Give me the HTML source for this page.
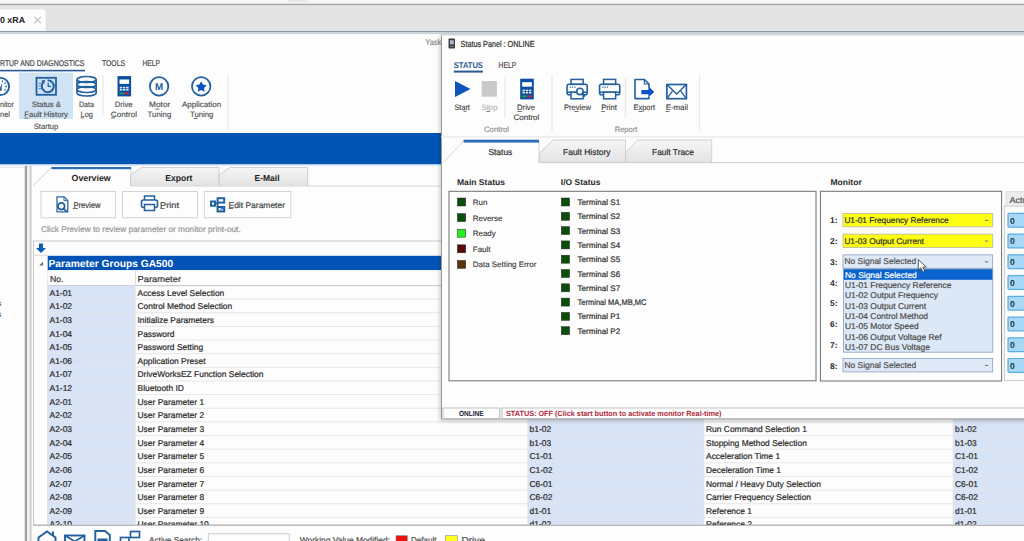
<!DOCTYPE html>
<html><head><meta charset="utf-8"><style>
html,body{margin:0;padding:0;width:1024px;height:541px;overflow:hidden;background:#fdfdfd}
svg{display:block;font-family:"Liberation Sans",sans-serif}
</style></head><body>
<svg width="1024" height="541" viewBox="0 0 1024 541" text-rendering="geometricPrecision">
<rect x="0" y="0" width="1024" height="541" fill="#fdfdfd" />
<rect x="0" y="0" width="1024" height="4" fill="#f6f6f6" />
<rect x="287.6" y="0" width="19.4" height="1.6" fill="#e6e6e6" />
<rect x="0" y="3.7" width="1024" height="1.8" fill="#a9a9a9" />
<rect x="0" y="5.5" width="1024" height="25.6" fill="#e4e4e4" />
<rect x="0" y="31" width="1024" height="1.3" fill="#8d9ba6" />
<rect x="0" y="32.3" width="1024" height="1.8" fill="#c9d2d8" />
<path d="M0 9.6 H42.6 Q45.6 9.6 45.6 12.6 V31 H0 Z" fill="#fdfdfd"/>
<text x="0" y="23.3" font-size="8.8" fill="#202020" font-weight="bold" textLength="25" lengthAdjust="spacingAndGlyphs" >0 xRA</text>
<line x1="34.2" y1="16.8" x2="41" y2="23.4" stroke="#bdbdbd" stroke-width="1.1" />
<line x1="41" y1="16.8" x2="34.2" y2="23.4" stroke="#bdbdbd" stroke-width="1.1" />
<text x="0" y="65.5" font-size="8.4" fill="#4d4d4d" stroke="#4d4d4d" stroke-width="0.22" textLength="84.5" lengthAdjust="spacingAndGlyphs" >RTUP AND DIAGNOSTICS</text>
<rect x="0" y="69.8" width="85" height="1.6" fill="#2a5a94" />
<text x="102" y="65.5" font-size="8.4" fill="#4d4d4d" stroke="#4d4d4d" stroke-width="0.22" textLength="23" lengthAdjust="spacingAndGlyphs" >TOOLS</text>
<text x="142.5" y="65.5" font-size="8.4" fill="#4d4d4d" stroke="#4d4d4d" stroke-width="0.22" textLength="17.5" lengthAdjust="spacingAndGlyphs" >HELP</text>
<text x="425.3" y="44.5" font-size="8.4" fill="#8a8f88" stroke="#8a8f88" stroke-width="0.22" textLength="16" lengthAdjust="spacingAndGlyphs" >Yask</text>
<rect x="19" y="72.6" width="54" height="46.4" fill="#cfe3f5" />
<circle cx="0.5" cy="86.5" r="8.6" fill="none" stroke="#22609f" stroke-width="1.9"/>
<line x1="2.1416966879632104" y1="81.98947542022763" x2="2.6889289172842807" y2="80.48596722697019" stroke="#22609f" stroke-width="1.3" />
<line x1="4.4319298125871605" y1="83.74683310551498" x2="5.742573083449548" y2="82.8291108073533" stroke="#22609f" stroke-width="1.3" />
<line x1="5.3" y1="86.5" x2="6.9" y2="86.5" stroke="#22609f" stroke-width="1.3" />
<line x1="4.4319298125871605" y1="89.25316689448502" x2="5.742573083449548" y2="90.1708891926467" stroke="#22609f" stroke-width="1.3" />
<path d="M-1 90.5 L2.2 82.5 L1.5 91 Z" fill="#22609f"/>
<text x="0" y="107.3" font-size="7.8" fill="#4a4a4a" stroke="#4a4a4a" stroke-width="0.12" textLength="14" lengthAdjust="spacingAndGlyphs" >nitor</text>
<text x="0" y="116.5" font-size="7.8" fill="#4a4a4a" stroke="#4a4a4a" stroke-width="0.12" textLength="10" lengthAdjust="spacingAndGlyphs" >nel</text>
<rect x="36.5" y="77.8" width="19.5" height="17" fill="none" stroke="#24609c" stroke-width="1.8" />
<path d="M43.3 82.2 A6 6 0 1 0 47.6 80.2" fill="none" stroke="#22609f" stroke-width="2"/>
<path d="M41.2 80.8 L45.2 79.8 L44 84.2 Z" fill="#22609f"/>
<line x1="48.2" y1="82.8" x2="48.2" y2="86.4" stroke="#22609f" stroke-width="1.3" />
<line x1="48.2" y1="86.4" x2="51" y2="86.4" stroke="#22609f" stroke-width="1.3" />
<line x1="38.6" y1="83.3" x2="41.4" y2="83.3" stroke="#4a7ab0" stroke-width="1" />
<line x1="38.6" y1="86" x2="41.4" y2="86" stroke="#4a7ab0" stroke-width="1" />
<line x1="38.6" y1="88.7" x2="41.4" y2="88.7" stroke="#4a7ab0" stroke-width="1" />
<text x="31.8" y="107.3" font-size="7.8" fill="#4a4a4a" stroke="#4a4a4a" stroke-width="0.12" textLength="29.2" lengthAdjust="spacingAndGlyphs" >Status &amp;</text>
<text x="24.3" y="116.5" font-size="7.8" fill="#4a4a4a" stroke="#4a4a4a" stroke-width="0.12" textLength="43.7" lengthAdjust="spacingAndGlyphs" >Fault History</text>
<text x="33.8" y="128.5" font-size="7.8" fill="#4a4a4a" stroke="#4a4a4a" stroke-width="0.12" textLength="24.5" lengthAdjust="spacingAndGlyphs" >Startup</text>
<ellipse cx="86.6" cy="79.5" rx="9.6" ry="3" fill="none" stroke="#22609f" stroke-width="1.6"/>
<ellipse cx="86.6" cy="84.5" rx="9.6" ry="3" fill="none" stroke="#22609f" stroke-width="1.6"/>
<ellipse cx="86.6" cy="89.5" rx="9.6" ry="3" fill="none" stroke="#22609f" stroke-width="1.6"/>
<path d="M77 79.5 V93 A9.6 3 0 0 0 96.2 93 V79.5" fill="none" stroke="#22609f" stroke-width="1.6"/>
<text x="79" y="107.3" font-size="7.8" fill="#4a4a4a" stroke="#4a4a4a" stroke-width="0.12" textLength="15" lengthAdjust="spacingAndGlyphs" >Data</text>
<text x="80.5" y="116.5" font-size="7.8" fill="#4a4a4a" stroke="#4a4a4a" stroke-width="0.12" textLength="12.5" lengthAdjust="spacingAndGlyphs" >Log</text>
<line x1="103" y1="75" x2="103" y2="115" stroke="#e6e6e6" stroke-width="1" />
<rect x="117.5" y="76.1" width="13.6" height="20.3" fill="#0c4fa0" />
<rect x="119.5" y="79.5" width="9.6" height="4.4" fill="#ffffff" />
<rect x="119.8" y="86.8" width="2.3999999999999995" height="1.6" fill="#dce8f4" />
<rect x="123.0" y="86.8" width="2.3999999999999995" height="1.6" fill="#dce8f4" />
<rect x="126.2" y="86.8" width="2.3999999999999995" height="1.6" fill="#dce8f4" />
<rect x="119.8" y="89.0" width="2.3999999999999995" height="1.6" fill="#dce8f4" />
<rect x="123.0" y="89.0" width="2.3999999999999995" height="1.6" fill="#dce8f4" />
<rect x="126.2" y="89.0" width="2.3999999999999995" height="1.6" fill="#dce8f4" />
<rect x="119.5" y="92.5" width="4.5" height="1.8" fill="#2aa050" />
<rect x="124.6" y="92.5" width="4.5" height="1.8" fill="#d02040" />
<text x="114.8" y="107.3" font-size="7.8" fill="#4a4a4a" stroke="#4a4a4a" stroke-width="0.12" textLength="17.7" lengthAdjust="spacingAndGlyphs" >Drive</text>
<text x="110.8" y="116.5" font-size="7.8" fill="#4a4a4a" stroke="#4a4a4a" stroke-width="0.12" textLength="26.2" lengthAdjust="spacingAndGlyphs" >Control</text>
<circle cx="159.1" cy="86.4" r="9.2" fill="none" stroke="#22609f" stroke-width="1.8"/>
<text x="159.1" y="90.2" font-size="10" fill="#22609f" font-weight="bold" text-anchor="middle" textLength="8.2" lengthAdjust="spacingAndGlyphs">M</text>
<text x="149" y="107.3" font-size="7.8" fill="#4a4a4a" stroke="#4a4a4a" stroke-width="0.12" textLength="21.3" lengthAdjust="spacingAndGlyphs" >Motor</text>
<text x="147.5" y="116.5" font-size="7.8" fill="#4a4a4a" stroke="#4a4a4a" stroke-width="0.12" textLength="23.8" lengthAdjust="spacingAndGlyphs" >Tuning</text>
<circle cx="201.2" cy="86.4" r="9.2" fill="none" stroke="#22609f" stroke-width="1.8"/>
<polygon points="201.20,81.20 202.96,84.57 206.72,85.21 204.05,87.93 204.61,91.69 201.20,90.00 197.79,91.69 198.35,87.93 195.68,85.21 199.44,84.57" fill="#0b50bc"/>
<text x="182" y="107.3" font-size="7.8" fill="#4a4a4a" stroke="#4a4a4a" stroke-width="0.12" textLength="39.3" lengthAdjust="spacingAndGlyphs" >Application</text>
<text x="190" y="116.5" font-size="7.8" fill="#4a4a4a" stroke="#4a4a4a" stroke-width="0.12" textLength="23.3" lengthAdjust="spacingAndGlyphs" >Tuning</text>
<line x1="228" y1="75" x2="228" y2="130" stroke="#e6e6e6" stroke-width="1" />
<rect x="0" y="133" width="1024" height="31.5" fill="#0054b4" />
<rect x="0" y="164.4" width="1024" height="1.6" fill="#d6e6f6" />
<text x="-3" y="306" font-size="8.4" fill="#555" stroke="#555" stroke-width="0.22" >s</text>
<text x="-3" y="317" font-size="8.4" fill="#555" stroke="#555" stroke-width="0.22" >s</text>
<rect x="0" y="167" width="25" height="0.8" fill="#ebe3e3" />
<rect x="24.8" y="166" width="2.2" height="375" fill="#a0a0a0" />
<rect x="27" y="166" width="2.6" height="375" fill="#f2f2f2" />
<rect x="29.6" y="166" width="2" height="375" fill="#cfcfcf" />
<path d="M33 186 L51.4 167.5 H131 V186" fill="#fdfdfd" stroke="#c8c8c8" stroke-width="0.8"/>
<rect x="51.4" y="167" width="79.6" height="2.2" fill="#2a6eb5" />
<defs><linearGradient id="tabg" x1="0" y1="0" x2="0" y2="1"><stop offset="0" stop-color="#f6f6f6"/><stop offset="1" stop-color="#e2e2e2"/></linearGradient></defs>
<path d="M130.5 185.5 V175 L141.5 167.5 H219 V185.5" fill="url(#tabg)" stroke="#c4c4c4" stroke-width="0.8"/>
<path d="M219 185.5 V175 L230 167.5 H307.7 V185.5" fill="url(#tabg)" stroke="#c4c4c4" stroke-width="0.8"/>
<line x1="131" y1="186" x2="1024" y2="186" stroke="#c8c8c8" stroke-width="0.8" />
<text x="71.6" y="180.5" font-size="8.8" fill="#222" font-weight="bold" textLength="39.0" lengthAdjust="spacingAndGlyphs" >Overview</text>
<text x="165.3" y="180.5" font-size="8.8" fill="#222" font-weight="bold" textLength="27.0" lengthAdjust="spacingAndGlyphs" >Export</text>
<text x="254.5" y="180.5" font-size="8.8" fill="#222" font-weight="bold" textLength="25.0" lengthAdjust="spacingAndGlyphs" >E-Mail</text>
<rect x="41" y="191.5" width="74.6" height="26.3" fill="#fdfdfd" stroke="#cfcfcf" stroke-width="0.9" />
<rect x="122.5" y="191.5" width="74.9" height="26.3" fill="#fdfdfd" stroke="#cfcfcf" stroke-width="0.9" />
<rect x="204.3" y="191.5" width="86.5" height="26.3" fill="#fdfdfd" stroke="#cfcfcf" stroke-width="0.9" />
<text x="73.5" y="207.5" font-size="8.3" fill="#4a4a4a" stroke="#4a4a4a" stroke-width="0.22" textLength="27.0" lengthAdjust="spacingAndGlyphs" >Preview</text>
<text x="160" y="207.5" font-size="8.3" fill="#4a4a4a" stroke="#4a4a4a" stroke-width="0.22" textLength="19" lengthAdjust="spacingAndGlyphs" >Print</text>
<text x="228.5" y="207.5" font-size="8.3" fill="#4a4a4a" stroke="#4a4a4a" stroke-width="0.22" textLength="56.5" lengthAdjust="spacingAndGlyphs" >Edit Parameter</text>
<path d="M57 196.8 H64 L67.8 200.6 V211.8 H57 Z" fill="none" stroke="#2a6aa0" stroke-width="1.3"/>
<path d="M64 196.8 V200.6 H67.8" fill="none" stroke="#2a6aa0" stroke-width="1"/>
<circle cx="61.3" cy="206.2" r="3.3" fill="#fdfdfd" stroke="#1f5a98" stroke-width="1.7"/>
<line x1="63.6" y1="208.6" x2="67" y2="212" stroke="#1f5a98" stroke-width="1.7" />
<g transform="translate(3.5,0)">
<path d="M141 200 V196 H151 V200" fill="none" stroke="#22609f" stroke-width="1.5"/>
<rect x="138" y="200" width="16" height="7.5" rx="2" fill="none" stroke="#22609f" stroke-width="1.6"/>
<rect x="141" y="204.5" width="10" height="6" fill="#fdfdfd" stroke="#22609f" stroke-width="1.5"/>
</g>
<rect x="211" y="201.5" width="4" height="4.2" fill="#fdfdfd" stroke="#2262a4" stroke-width="2" />
<rect x="217.6" y="198.2" width="6.6" height="4.4" fill="#fdfdfd" stroke="#2262a4" stroke-width="2" />
<rect x="217.6" y="207" width="6.6" height="4.4" fill="#fdfdfd" stroke="#1d5a8c" stroke-width="2" />
<line x1="215" y1="203.6" x2="217.6" y2="203.6" stroke="#2262a4" stroke-width="1.6" />
<line x1="217.6" y1="202" x2="217.6" y2="207.5" stroke="#2262a4" stroke-width="1.8" />
<path d="M219.5 210 L223.8 205.6 L224.6 208.8 Z" fill="#1a6ad0"/>
<text x="41" y="231.5" font-size="8.3" fill="#9a9a9a" stroke="#9a9a9a" stroke-width="0.22" textLength="199.7" lengthAdjust="spacingAndGlyphs" >Click Preview to review parameter or monitor print-out.</text>
<rect x="33.5" y="241" width="990.5" height="284" fill="#fdfdfd" stroke="#c9c9c9" stroke-width="1" />
<path d="M39 243.5 H43 V248 H46 L41 253 L36 248 H39 Z" fill="#0a5cc0"/>
<rect x="47.7" y="255.8" width="976.3" height="14.4" fill="#0352b6" />
<text x="48.5" y="267" font-size="10.3" fill="#ffffff" font-weight="bold" textLength="124.7" lengthAdjust="spacingAndGlyphs" >Parameter Groups GA500</text>
<path d="M39.2 265.4 L43 261.8 V265.4 Z" fill="#666"/>
<line x1="33.6" y1="255.2" x2="47.7" y2="255.2" stroke="#d4d4d4" stroke-width="0.9" />
<line x1="47.9" y1="270" x2="47.9" y2="525" stroke="#cfcfcf" stroke-width="0.9" />
<rect x="47.7" y="270.2" width="976.3" height="15.3" fill="#fdfdfd" />
<line x1="47.7" y1="285.6" x2="1024" y2="285.6" stroke="#cdcdcd" stroke-width="1.4" />
<line x1="135.5" y1="270.2" x2="135.5" y2="285.5" stroke="#dcdcdc" stroke-width="1" />
<text x="50" y="281.5" font-size="8.6" fill="#3a3a3a" stroke="#3a3a3a" stroke-width="0.22" textLength="13.5" lengthAdjust="spacingAndGlyphs" >No.</text>
<text x="137.5" y="281.5" font-size="8.6" fill="#3a3a3a" stroke="#3a3a3a" stroke-width="0.22" textLength="43.5" lengthAdjust="spacingAndGlyphs" >Parameter</text>
<clipPath id="tclip"><rect x="33.5" y="285.5" width="990.5" height="239.5"/></clipPath>
<g clip-path="url(#tclip)">
<rect x="47.7" y="285.5" width="87.8" height="13.64" fill="#d8e4f5" />
<rect x="527.5" y="285.5" width="176.5" height="13.64" fill="#d8e4f5" />
<rect x="953" y="285.5" width="71" height="13.64" fill="#d8e4f5" />
<line x1="47.7" y1="299.14" x2="1024" y2="299.14" stroke="#e4e4e4" stroke-width="0.9" />
<text x="49.5" y="295.6" font-size="8.45" fill="#2e2e2e" stroke="#2e2e2e" stroke-width="0.22" >A1-01</text>
<text x="137.5" y="295.6" font-size="8.45" fill="#2e2e2e" stroke="#2e2e2e" stroke-width="0.22" >Access Level Selection</text>
<rect x="47.7" y="299.14" width="87.8" height="13.64" fill="#d8e4f5" />
<rect x="527.5" y="299.14" width="176.5" height="13.64" fill="#d8e4f5" />
<rect x="953" y="299.14" width="71" height="13.64" fill="#d8e4f5" />
<line x1="47.7" y1="312.78" x2="1024" y2="312.78" stroke="#e4e4e4" stroke-width="0.9" />
<text x="49.5" y="309.24" font-size="8.45" fill="#2e2e2e" stroke="#2e2e2e" stroke-width="0.22" >A1-02</text>
<text x="137.5" y="309.24" font-size="8.45" fill="#2e2e2e" stroke="#2e2e2e" stroke-width="0.22" >Control Method Selection</text>
<rect x="47.7" y="312.78" width="87.8" height="13.64" fill="#d8e4f5" />
<rect x="527.5" y="312.78" width="176.5" height="13.64" fill="#d8e4f5" />
<rect x="953" y="312.78" width="71" height="13.64" fill="#d8e4f5" />
<line x1="47.7" y1="326.41999999999996" x2="1024" y2="326.41999999999996" stroke="#e4e4e4" stroke-width="0.9" />
<text x="49.5" y="322.88" font-size="8.45" fill="#2e2e2e" stroke="#2e2e2e" stroke-width="0.22" >A1-03</text>
<text x="137.5" y="322.88" font-size="8.45" fill="#2e2e2e" stroke="#2e2e2e" stroke-width="0.22" >Initialize Parameters</text>
<rect x="47.7" y="326.42" width="87.8" height="13.64" fill="#d8e4f5" />
<rect x="527.5" y="326.42" width="176.5" height="13.64" fill="#d8e4f5" />
<rect x="953" y="326.42" width="71" height="13.64" fill="#d8e4f5" />
<line x1="47.7" y1="340.06" x2="1024" y2="340.06" stroke="#e4e4e4" stroke-width="0.9" />
<text x="49.5" y="336.52000000000004" font-size="8.45" fill="#2e2e2e" stroke="#2e2e2e" stroke-width="0.22" >A1-04</text>
<text x="137.5" y="336.52000000000004" font-size="8.45" fill="#2e2e2e" stroke="#2e2e2e" stroke-width="0.22" >Password</text>
<rect x="47.7" y="340.06" width="87.8" height="13.64" fill="#d8e4f5" />
<rect x="527.5" y="340.06" width="176.5" height="13.64" fill="#d8e4f5" />
<rect x="953" y="340.06" width="71" height="13.64" fill="#d8e4f5" />
<line x1="47.7" y1="353.7" x2="1024" y2="353.7" stroke="#e4e4e4" stroke-width="0.9" />
<text x="49.5" y="350.16" font-size="8.45" fill="#2e2e2e" stroke="#2e2e2e" stroke-width="0.22" >A1-05</text>
<text x="137.5" y="350.16" font-size="8.45" fill="#2e2e2e" stroke="#2e2e2e" stroke-width="0.22" >Password Setting</text>
<rect x="47.7" y="353.7" width="87.8" height="13.64" fill="#d8e4f5" />
<rect x="527.5" y="353.7" width="176.5" height="13.64" fill="#d8e4f5" />
<rect x="953" y="353.7" width="71" height="13.64" fill="#d8e4f5" />
<line x1="47.7" y1="367.34" x2="1024" y2="367.34" stroke="#e4e4e4" stroke-width="0.9" />
<text x="49.5" y="363.8" font-size="8.45" fill="#2e2e2e" stroke="#2e2e2e" stroke-width="0.22" >A1-06</text>
<text x="137.5" y="363.8" font-size="8.45" fill="#2e2e2e" stroke="#2e2e2e" stroke-width="0.22" >Application Preset</text>
<rect x="47.7" y="367.34000000000003" width="87.8" height="13.64" fill="#d8e4f5" />
<rect x="527.5" y="367.34000000000003" width="176.5" height="13.64" fill="#d8e4f5" />
<rect x="953" y="367.34000000000003" width="71" height="13.64" fill="#d8e4f5" />
<line x1="47.7" y1="380.98" x2="1024" y2="380.98" stroke="#e4e4e4" stroke-width="0.9" />
<text x="49.5" y="377.44000000000005" font-size="8.45" fill="#2e2e2e" stroke="#2e2e2e" stroke-width="0.22" >A1-07</text>
<text x="137.5" y="377.44000000000005" font-size="8.45" fill="#2e2e2e" stroke="#2e2e2e" stroke-width="0.22" >DriveWorksEZ Function Selection</text>
<rect x="47.7" y="380.98" width="87.8" height="13.64" fill="#d8e4f5" />
<rect x="527.5" y="380.98" width="176.5" height="13.64" fill="#d8e4f5" />
<rect x="953" y="380.98" width="71" height="13.64" fill="#d8e4f5" />
<line x1="47.7" y1="394.62" x2="1024" y2="394.62" stroke="#e4e4e4" stroke-width="0.9" />
<text x="49.5" y="391.08000000000004" font-size="8.45" fill="#2e2e2e" stroke="#2e2e2e" stroke-width="0.22" >A1-12</text>
<text x="137.5" y="391.08000000000004" font-size="8.45" fill="#2e2e2e" stroke="#2e2e2e" stroke-width="0.22" >Bluetooth ID</text>
<rect x="47.7" y="394.62" width="87.8" height="13.64" fill="#d8e4f5" />
<rect x="527.5" y="394.62" width="176.5" height="13.64" fill="#d8e4f5" />
<rect x="953" y="394.62" width="71" height="13.64" fill="#d8e4f5" />
<line x1="47.7" y1="408.26" x2="1024" y2="408.26" stroke="#e4e4e4" stroke-width="0.9" />
<text x="49.5" y="404.72" font-size="8.45" fill="#2e2e2e" stroke="#2e2e2e" stroke-width="0.22" >A2-01</text>
<text x="137.5" y="404.72" font-size="8.45" fill="#2e2e2e" stroke="#2e2e2e" stroke-width="0.22" >User Parameter 1</text>
<rect x="47.7" y="408.26" width="87.8" height="13.64" fill="#d8e4f5" />
<rect x="527.5" y="408.26" width="176.5" height="13.64" fill="#d8e4f5" />
<rect x="953" y="408.26" width="71" height="13.64" fill="#d8e4f5" />
<line x1="47.7" y1="421.9" x2="1024" y2="421.9" stroke="#e4e4e4" stroke-width="0.9" />
<text x="49.5" y="418.36" font-size="8.45" fill="#2e2e2e" stroke="#2e2e2e" stroke-width="0.22" >A2-02</text>
<text x="137.5" y="418.36" font-size="8.45" fill="#2e2e2e" stroke="#2e2e2e" stroke-width="0.22" >User Parameter 2</text>
<rect x="47.7" y="421.9" width="87.8" height="13.64" fill="#d8e4f5" />
<rect x="527.5" y="421.9" width="176.5" height="13.64" fill="#d8e4f5" />
<rect x="953" y="421.9" width="71" height="13.64" fill="#d8e4f5" />
<line x1="47.7" y1="435.53999999999996" x2="1024" y2="435.53999999999996" stroke="#e4e4e4" stroke-width="0.9" />
<text x="49.5" y="432.0" font-size="8.45" fill="#2e2e2e" stroke="#2e2e2e" stroke-width="0.22" >A2-03</text>
<text x="137.5" y="432.0" font-size="8.45" fill="#2e2e2e" stroke="#2e2e2e" stroke-width="0.22" >User Parameter 3</text>
<rect x="47.7" y="435.54" width="87.8" height="13.64" fill="#d8e4f5" />
<rect x="527.5" y="435.54" width="176.5" height="13.64" fill="#d8e4f5" />
<rect x="953" y="435.54" width="71" height="13.64" fill="#d8e4f5" />
<line x1="47.7" y1="449.18" x2="1024" y2="449.18" stroke="#e4e4e4" stroke-width="0.9" />
<text x="49.5" y="445.64000000000004" font-size="8.45" fill="#2e2e2e" stroke="#2e2e2e" stroke-width="0.22" >A2-04</text>
<text x="137.5" y="445.64000000000004" font-size="8.45" fill="#2e2e2e" stroke="#2e2e2e" stroke-width="0.22" >User Parameter 4</text>
<rect x="47.7" y="449.18" width="87.8" height="13.64" fill="#d8e4f5" />
<rect x="527.5" y="449.18" width="176.5" height="13.64" fill="#d8e4f5" />
<rect x="953" y="449.18" width="71" height="13.64" fill="#d8e4f5" />
<line x1="47.7" y1="462.82" x2="1024" y2="462.82" stroke="#e4e4e4" stroke-width="0.9" />
<text x="49.5" y="459.28000000000003" font-size="8.45" fill="#2e2e2e" stroke="#2e2e2e" stroke-width="0.22" >A2-05</text>
<text x="137.5" y="459.28000000000003" font-size="8.45" fill="#2e2e2e" stroke="#2e2e2e" stroke-width="0.22" >User Parameter 5</text>
<rect x="47.7" y="462.82" width="87.8" height="13.64" fill="#d8e4f5" />
<rect x="527.5" y="462.82" width="176.5" height="13.64" fill="#d8e4f5" />
<rect x="953" y="462.82" width="71" height="13.64" fill="#d8e4f5" />
<line x1="47.7" y1="476.46" x2="1024" y2="476.46" stroke="#e4e4e4" stroke-width="0.9" />
<text x="49.5" y="472.92" font-size="8.45" fill="#2e2e2e" stroke="#2e2e2e" stroke-width="0.22" >A2-06</text>
<text x="137.5" y="472.92" font-size="8.45" fill="#2e2e2e" stroke="#2e2e2e" stroke-width="0.22" >User Parameter 6</text>
<rect x="47.7" y="476.46000000000004" width="87.8" height="13.64" fill="#d8e4f5" />
<rect x="527.5" y="476.46000000000004" width="176.5" height="13.64" fill="#d8e4f5" />
<rect x="953" y="476.46000000000004" width="71" height="13.64" fill="#d8e4f5" />
<line x1="47.7" y1="490.1" x2="1024" y2="490.1" stroke="#e4e4e4" stroke-width="0.9" />
<text x="49.5" y="486.56000000000006" font-size="8.45" fill="#2e2e2e" stroke="#2e2e2e" stroke-width="0.22" >A2-07</text>
<text x="137.5" y="486.56000000000006" font-size="8.45" fill="#2e2e2e" stroke="#2e2e2e" stroke-width="0.22" >User Parameter 7</text>
<rect x="47.7" y="490.1" width="87.8" height="13.64" fill="#d8e4f5" />
<rect x="527.5" y="490.1" width="176.5" height="13.64" fill="#d8e4f5" />
<rect x="953" y="490.1" width="71" height="13.64" fill="#d8e4f5" />
<line x1="47.7" y1="503.74" x2="1024" y2="503.74" stroke="#e4e4e4" stroke-width="0.9" />
<text x="49.5" y="500.20000000000005" font-size="8.45" fill="#2e2e2e" stroke="#2e2e2e" stroke-width="0.22" >A2-08</text>
<text x="137.5" y="500.20000000000005" font-size="8.45" fill="#2e2e2e" stroke="#2e2e2e" stroke-width="0.22" >User Parameter 8</text>
<rect x="47.7" y="503.74" width="87.8" height="13.64" fill="#d8e4f5" />
<rect x="527.5" y="503.74" width="176.5" height="13.64" fill="#d8e4f5" />
<rect x="953" y="503.74" width="71" height="13.64" fill="#d8e4f5" />
<line x1="47.7" y1="517.38" x2="1024" y2="517.38" stroke="#e4e4e4" stroke-width="0.9" />
<text x="49.5" y="513.84" font-size="8.45" fill="#2e2e2e" stroke="#2e2e2e" stroke-width="0.22" >A2-09</text>
<text x="137.5" y="513.84" font-size="8.45" fill="#2e2e2e" stroke="#2e2e2e" stroke-width="0.22" >User Parameter 9</text>
<rect x="47.7" y="517.38" width="87.8" height="13.64" fill="#d8e4f5" />
<rect x="527.5" y="517.38" width="176.5" height="13.64" fill="#d8e4f5" />
<rect x="953" y="517.38" width="71" height="13.64" fill="#d8e4f5" />
<line x1="47.7" y1="531.02" x2="1024" y2="531.02" stroke="#e4e4e4" stroke-width="0.9" />
<text x="49.5" y="527.48" font-size="8.45" fill="#2e2e2e" stroke="#2e2e2e" stroke-width="0.22" >A2-10</text>
<text x="137.5" y="527.48" font-size="8.45" fill="#2e2e2e" stroke="#2e2e2e" stroke-width="0.22" >User Parameter 10</text>
<text x="529.5" y="432.0" font-size="8.45" fill="#2e2e2e" stroke="#2e2e2e" stroke-width="0.22" >b1-02</text>
<text x="706" y="432.0" font-size="8.45" fill="#2e2e2e" stroke="#2e2e2e" stroke-width="0.22" >Run Command Selection 1</text>
<text x="955" y="432.0" font-size="8.45" fill="#2e2e2e" stroke="#2e2e2e" stroke-width="0.22" >b1-02</text>
<text x="529.5" y="445.64000000000004" font-size="8.45" fill="#2e2e2e" stroke="#2e2e2e" stroke-width="0.22" >b1-03</text>
<text x="706" y="445.64000000000004" font-size="8.45" fill="#2e2e2e" stroke="#2e2e2e" stroke-width="0.22" >Stopping Method Selection</text>
<text x="955" y="445.64000000000004" font-size="8.45" fill="#2e2e2e" stroke="#2e2e2e" stroke-width="0.22" >b1-03</text>
<text x="529.5" y="459.28000000000003" font-size="8.45" fill="#2e2e2e" stroke="#2e2e2e" stroke-width="0.22" >C1-01</text>
<text x="706" y="459.28000000000003" font-size="8.45" fill="#2e2e2e" stroke="#2e2e2e" stroke-width="0.22" >Acceleration Time 1</text>
<text x="955" y="459.28000000000003" font-size="8.45" fill="#2e2e2e" stroke="#2e2e2e" stroke-width="0.22" >C1-01</text>
<text x="529.5" y="472.92" font-size="8.45" fill="#2e2e2e" stroke="#2e2e2e" stroke-width="0.22" >C1-02</text>
<text x="706" y="472.92" font-size="8.45" fill="#2e2e2e" stroke="#2e2e2e" stroke-width="0.22" >Deceleration Time 1</text>
<text x="955" y="472.92" font-size="8.45" fill="#2e2e2e" stroke="#2e2e2e" stroke-width="0.22" >C1-02</text>
<text x="529.5" y="486.56000000000006" font-size="8.45" fill="#2e2e2e" stroke="#2e2e2e" stroke-width="0.22" >C6-01</text>
<text x="706" y="486.56000000000006" font-size="8.45" fill="#2e2e2e" stroke="#2e2e2e" stroke-width="0.22" >Normal / Heavy Duty Selection</text>
<text x="955" y="486.56000000000006" font-size="8.45" fill="#2e2e2e" stroke="#2e2e2e" stroke-width="0.22" >C6-01</text>
<text x="529.5" y="500.20000000000005" font-size="8.45" fill="#2e2e2e" stroke="#2e2e2e" stroke-width="0.22" >C6-02</text>
<text x="706" y="500.20000000000005" font-size="8.45" fill="#2e2e2e" stroke="#2e2e2e" stroke-width="0.22" >Carrier Frequency Selection</text>
<text x="955" y="500.20000000000005" font-size="8.45" fill="#2e2e2e" stroke="#2e2e2e" stroke-width="0.22" >C6-02</text>
<text x="529.5" y="513.84" font-size="8.45" fill="#2e2e2e" stroke="#2e2e2e" stroke-width="0.22" >d1-01</text>
<text x="706" y="513.84" font-size="8.45" fill="#2e2e2e" stroke="#2e2e2e" stroke-width="0.22" >Reference 1</text>
<text x="955" y="513.84" font-size="8.45" fill="#2e2e2e" stroke="#2e2e2e" stroke-width="0.22" >d1-01</text>
<text x="529.5" y="527.48" font-size="8.45" fill="#2e2e2e" stroke="#2e2e2e" stroke-width="0.22" >d1-02</text>
<text x="706" y="527.48" font-size="8.45" fill="#2e2e2e" stroke="#2e2e2e" stroke-width="0.22" >Reference 2</text>
<text x="955" y="527.48" font-size="8.45" fill="#2e2e2e" stroke="#2e2e2e" stroke-width="0.22" >d1-02</text>
</g>
<line x1="135.5" y1="285.5" x2="135.5" y2="525" stroke="#e8e8e8" stroke-width="0.8" />
<line x1="527.5" y1="285.5" x2="527.5" y2="525" stroke="#e8e8e8" stroke-width="0.8" />
<line x1="704" y1="285.5" x2="704" y2="525" stroke="#e8e8e8" stroke-width="0.8" />
<line x1="953" y1="285.5" x2="953" y2="525" stroke="#e8e8e8" stroke-width="0.8" />
<line x1="33.5" y1="525.3" x2="1024" y2="525.3" stroke="#b9b9b9" stroke-width="1.2" />
<path d="M38.5 543 V537.5 L47 531.5 L55.5 537.5 V543" fill="none" stroke="#22609f" stroke-width="1.9"/>
<rect x="52" y="531.5" width="2" height="3.5" fill="#22609f" />
<rect x="65" y="535.5" width="19.5" height="10" fill="none" stroke="#22609f" stroke-width="1.9" />
<path d="M65 535.5 L74.75 541.5 L84.5 535.5" fill="none" stroke="#22609f" stroke-width="1.7"/>
<path d="M95.3 531 H105 L109.8 535 V543 H95.3 Z" fill="none" stroke="#22609f" stroke-width="1.9"/>
<rect x="97.5" y="538.5" width="10" height="4" fill="#22609f" />
<rect x="120.5" y="537.5" width="8.5" height="6" fill="none" stroke="#22609f" stroke-width="1.7" />
<rect x="130.5" y="531.5" width="9" height="6" fill="none" stroke="#22609f" stroke-width="1.7" />
<text x="149" y="543" font-size="8.6" fill="#555" stroke="#555" stroke-width="0.22" textLength="53" lengthAdjust="spacingAndGlyphs" >Active Search:</text>
<rect x="208.3" y="533.8" width="81" height="10" fill="#fdfdfd" stroke="#c8c8c8" stroke-width="0.9" />
<text x="299.8" y="543" font-size="8.6" fill="#555" stroke="#555" stroke-width="0.22" textLength="90.2" lengthAdjust="spacingAndGlyphs" >Working Value Modified:</text>
<rect x="396" y="535.7" width="11.3" height="10" fill="#ee1111" stroke="#888" stroke-width="0.6" />
<text x="411" y="543" font-size="8.6" fill="#555" stroke="#555" stroke-width="0.22" textLength="25.5" lengthAdjust="spacingAndGlyphs" >Default</text>
<rect x="445.3" y="535.7" width="12" height="10" fill="#ffff22" stroke="#888" stroke-width="0.6" />
<text x="461.5" y="543" font-size="8.6" fill="#555" stroke="#555" stroke-width="0.22" textLength="23.5" lengthAdjust="spacingAndGlyphs" >Drive</text>
<defs><filter id="shd" x="-5%" y="-5%" width="110%" height="110%"><feGaussianBlur stdDeviation="2"/></filter></defs>
<rect x="440" y="36" width="600" height="385" fill="rgba(0,0,0,0.22)" filter="url(#shd)"/>
<rect x="441" y="34.4" width="583" height="384.4" fill="#fdfdfd" />
<line x1="441.5" y1="34.4" x2="441.5" y2="418.8" stroke="#9a9a9a" stroke-width="1" />
<line x1="441" y1="34.9" x2="1024" y2="34.9" stroke="#c9c9c9" stroke-width="1" />
<line x1="441" y1="418.9" x2="1024" y2="418.9" stroke="#a4a4a4" stroke-width="1" />
<rect x="448.5" y="38.5" width="6.5" height="10" fill="#3c3c3c" rx="0.8" />
<rect x="449.8" y="40.2" width="4" height="4.2" fill="#a9b6cc" />
<rect x="450.3" y="46" width="3" height="0.8" fill="#9a9a9a" />
<text x="460.6" y="47" font-size="8.8" fill="#303030" stroke="#303030" stroke-width="0.22" textLength="73.9" lengthAdjust="spacingAndGlyphs" >Status Panel : ONLINE</text>
<text x="453.8" y="67.5" font-size="8.4" fill="#2a5a94" font-weight="bold" textLength="29.1" lengthAdjust="spacingAndGlyphs" >STATUS</text>
<rect x="453.8" y="70.6" width="29.1" height="2" fill="#2a5a94" />
<text x="498.6" y="67.5" font-size="8.4" fill="#5a4a5a" stroke="#5a4a5a" stroke-width="0.22" textLength="17.6" lengthAdjust="spacingAndGlyphs" >HELP</text>
<path d="M455 81 L470.5 89 L455 97 Z" fill="#0d55bb"/>
<text x="454.5" y="110" font-size="7.9" fill="#404040" stroke="#404040" stroke-width="0.12" textLength="15.4" lengthAdjust="spacingAndGlyphs" >Start</text>
<rect x="481.7" y="81" width="15.2" height="15.7" fill="#c9c9c9" />
<text x="481.5" y="110" font-size="7.9" fill="#b0b0b0" stroke="#b0b0b0" stroke-width="0.12" textLength="16.0" lengthAdjust="spacingAndGlyphs" >Stop</text>
<line x1="505" y1="76" x2="505" y2="118" stroke="#e4e4e4" stroke-width="1" />
<rect x="520.2" y="78.7" width="13.6" height="20.7" fill="#0c4fa0" />
<rect x="522.2" y="82.16699507389163" width="9.6" height="4.4866995073891625" fill="#ffffff" />
<rect x="522.5" y="89.61083743842364" width="2.3999999999999995" height="1.631527093596059" fill="#dce8f4" />
<rect x="525.7" y="89.61083743842364" width="2.3999999999999995" height="1.631527093596059" fill="#dce8f4" />
<rect x="528.9" y="89.61083743842364" width="2.3999999999999995" height="1.631527093596059" fill="#dce8f4" />
<rect x="522.5" y="91.85418719211823" width="2.3999999999999995" height="1.631527093596059" fill="#dce8f4" />
<rect x="525.7" y="91.85418719211823" width="2.3999999999999995" height="1.631527093596059" fill="#dce8f4" />
<rect x="528.9" y="91.85418719211823" width="2.3999999999999995" height="1.631527093596059" fill="#dce8f4" />
<rect x="522.2" y="95.42315270935961" width="4.5" height="1.8354679802955665" fill="#2aa050" />
<rect x="527.3" y="95.42315270935961" width="4.5" height="1.8354679802955665" fill="#d02040" />
<text x="517" y="110" font-size="7.9" fill="#404040" stroke="#404040" stroke-width="0.12" textLength="18" lengthAdjust="spacingAndGlyphs" >Drive</text>
<text x="513.4" y="119.5" font-size="7.9" fill="#404040" stroke="#404040" stroke-width="0.12" textLength="26.0" lengthAdjust="spacingAndGlyphs" >Control</text>
<text x="484" y="132.4" font-size="7.9" fill="#8a8a8a" stroke="#8a8a8a" stroke-width="0.12" textLength="25" lengthAdjust="spacingAndGlyphs" >Control</text>
<line x1="552" y1="75" x2="552" y2="131" stroke="#e4e4e4" stroke-width="1" />
<rect x="571.05" y="79.4" width="12.1" height="5" fill="none" stroke="#22609f" stroke-width="1.5"/>
<rect x="567.05" y="84.2" width="20.2" height="10.6" rx="2" fill="none" stroke="#22609f" stroke-width="1.6"/>
<line x1="567.3" y1="92.2" x2="586.8" y2="92.2" stroke="#22609f" stroke-width="1.5" />
<rect x="571.05" y="92.2" width="12.1" height="6.6" fill="#fdfdfd" stroke="#22609f" stroke-width="1.5"/>
<rect x="569.5999999999999" y="86.6" width="1.3" height="1.1" fill="#22609f" />
<rect x="571.8999999999999" y="86.6" width="1.3" height="1.1" fill="#22609f" />
<rect x="574.1999999999999" y="86.6" width="1.3" height="1.1" fill="#22609f" />
<circle cx="579.9" cy="91.4" r="3.2" fill="#fdfdfd" stroke="#22609f" stroke-width="1.6"/>
<line x1="582.1999999999999" y1="93.7" x2="584.9" y2="96.6" stroke="#22609f" stroke-width="1.7" />
<text x="564" y="110" font-size="7.9" fill="#404040" stroke="#404040" stroke-width="0.12" textLength="27" lengthAdjust="spacingAndGlyphs" >Preview</text>
<rect x="603.55" y="79.4" width="12.1" height="5" fill="none" stroke="#22609f" stroke-width="1.5"/>
<rect x="599.55" y="84.2" width="20.2" height="10.6" rx="2" fill="none" stroke="#22609f" stroke-width="1.6"/>
<line x1="599.8" y1="92.2" x2="619.3" y2="92.2" stroke="#22609f" stroke-width="1.5" />
<rect x="603.55" y="92.2" width="12.1" height="6.6" fill="#fdfdfd" stroke="#22609f" stroke-width="1.5"/>
<rect x="602.0999999999999" y="86.6" width="1.3" height="1.1" fill="#22609f" />
<rect x="604.3999999999999" y="86.6" width="1.3" height="1.1" fill="#22609f" />
<rect x="606.6999999999999" y="86.6" width="1.3" height="1.1" fill="#22609f" />
<text x="601.2" y="110" font-size="7.9" fill="#404040" stroke="#404040" stroke-width="0.12" textLength="15.8" lengthAdjust="spacingAndGlyphs" >Print</text>
<line x1="625.3" y1="78" x2="625.3" y2="118" stroke="#e4e4e4" stroke-width="1" />
<path d="M649 87.5 V84 L644.4 79.5 H635 V98.6 H649 V96.5" fill="none" stroke="#22609f" stroke-width="1.6" stroke-linejoin="round"/>
<path d="M644.4 79.6 V84 H648.8" fill="none" stroke="#22609f" stroke-width="1.2"/>
<path d="M641.4 90 H648.4 V86.2 L654.3 92 L648.4 97.3 V94.3 H641.4 Z" fill="#0d52c4"/>
<text x="633.6" y="110" font-size="7.9" fill="#404040" stroke="#404040" stroke-width="0.12" textLength="21.4" lengthAdjust="spacingAndGlyphs" >Export</text>
<rect x="666.9" y="84.5" width="19.5" height="14.2" fill="none" stroke="#22609f" stroke-width="1.7" />
<path d="M667 84.6 L676.6 94 L686.3 84.6 M667 98.6 L672.4 91.2 M686.3 98.6 L680.8 91.2" fill="none" stroke="#22609f" stroke-width="1.4"/>
<text x="665.7" y="110" font-size="7.9" fill="#404040" stroke="#404040" stroke-width="0.12" textLength="22.3" lengthAdjust="spacingAndGlyphs" >E-mail</text>
<text x="614.7" y="132.4" font-size="7.9" fill="#8a8a8a" stroke="#8a8a8a" stroke-width="0.12" textLength="22.7" lengthAdjust="spacingAndGlyphs" >Report</text>
<line x1="699.6" y1="75" x2="699.6" y2="131" stroke="#e4e4e4" stroke-width="1" />
<line x1="441" y1="136.8" x2="1024" y2="136.8" stroke="#e8e8e8" stroke-width="1.2" />
<path d="M539.5 163 V153 L553 140 H625.5 V163" fill="url(#tabg)" stroke="#c6c6c6" stroke-width="0.8"/>
<path d="M625.5 163 V153 L637.5 140 H711.7 V163" fill="url(#tabg)" stroke="#c6c6c6" stroke-width="0.8"/>
<path d="M443 162.5 L463.6 141 H539 V163" fill="#fdfdfd" stroke="#cdcdcd" stroke-width="0.8"/>
<rect x="463.6" y="139.7" width="75.4" height="2.9" fill="#2a6eb5" />
<line x1="539" y1="162.6" x2="1024" y2="162.6" stroke="#cacaca" stroke-width="0.9" />
<text x="488.4" y="155" font-size="8.6" fill="#333" stroke="#333" stroke-width="0.22" textLength="23.9" lengthAdjust="spacingAndGlyphs" >Status</text>
<text x="563" y="155" font-size="8.6" fill="#333" stroke="#333" stroke-width="0.22" textLength="47.6" lengthAdjust="spacingAndGlyphs" >Fault History</text>
<text x="652" y="155" font-size="8.6" fill="#333" stroke="#333" stroke-width="0.22" textLength="42" lengthAdjust="spacingAndGlyphs" >Fault Trace</text>
<text x="457" y="185" font-size="8.4" fill="#2a2a2a" font-weight="bold" textLength="48" lengthAdjust="spacingAndGlyphs" >Main Status</text>
<text x="560.8" y="184.7" font-size="8.4" fill="#2a2a2a" font-weight="bold" textLength="39.7" lengthAdjust="spacingAndGlyphs" >I/O Status</text>
<text x="830.5" y="184.8" font-size="8.4" fill="#2a2a2a" font-weight="bold" textLength="31.2" lengthAdjust="spacingAndGlyphs" >Monitor</text>
<rect x="449" y="191.3" width="367" height="189.5" fill="none" stroke="#6e6e6e" stroke-width="1" />
<rect x="820.4" y="191.3" width="181.2" height="189.7" fill="none" stroke="#6e6e6e" stroke-width="1" />
<rect x="1004.4" y="206" width="30" height="174.5" fill="#fbfbfb" stroke="#d0d0d0" stroke-width="1.2" />
<rect x="1006" y="191.7" width="30" height="14.3" fill="#ececec" stroke="#d8d8d8" stroke-width="0.8" />
<text x="1009.4" y="202.8" font-size="8.4" fill="#555" stroke="#555" stroke-width="0.22" textLength="18" lengthAdjust="spacingAndGlyphs" >Actu</text>
<rect x="457.4" y="198" width="8.3" height="8" fill="#0b4d0b" stroke="#2a2a2a" stroke-width="0.5" />
<text x="472.8" y="205" font-size="7.95" fill="#333" stroke="#333" stroke-width="0.12" >Run</text>
<rect x="457.4" y="213.6" width="8.3" height="8" fill="#0b4d0b" stroke="#2a2a2a" stroke-width="0.5" />
<text x="472.8" y="220.6" font-size="7.95" fill="#333" stroke="#333" stroke-width="0.12" >Reverse</text>
<rect x="457.4" y="229.2" width="8.3" height="8" fill="#22ee22" stroke="#2a2a2a" stroke-width="0.5" />
<text x="472.8" y="236.2" font-size="7.95" fill="#333" stroke="#333" stroke-width="0.12" >Ready</text>
<rect x="457.4" y="244.8" width="8.3" height="8" fill="#5a0808" stroke="#2a2a2a" stroke-width="0.5" />
<text x="472.8" y="251.8" font-size="7.95" fill="#333" stroke="#333" stroke-width="0.12" >Fault</text>
<rect x="457.4" y="260.4" width="8.3" height="8" fill="#5a330c" stroke="#2a2a2a" stroke-width="0.5" />
<text x="472.8" y="267.4" font-size="7.95" fill="#333" stroke="#333" stroke-width="0.12" >Data Setting Error</text>
<rect x="561.3" y="198.0" width="8.3" height="8" fill="#0b4d0b" stroke="#2a2a2a" stroke-width="0.5" />
<text x="577.5" y="205.0" font-size="8.1" fill="#333" stroke="#333" stroke-width="0.22" >Terminal S1</text>
<rect x="561.3" y="212.3" width="8.3" height="8" fill="#0b4d0b" stroke="#2a2a2a" stroke-width="0.5" />
<text x="577.5" y="219.3" font-size="8.1" fill="#333" stroke="#333" stroke-width="0.22" >Terminal S2</text>
<rect x="561.3" y="226.6" width="8.3" height="8" fill="#0b4d0b" stroke="#2a2a2a" stroke-width="0.5" />
<text x="577.5" y="233.6" font-size="8.1" fill="#333" stroke="#333" stroke-width="0.22" >Terminal S3</text>
<rect x="561.3" y="240.9" width="8.3" height="8" fill="#0b4d0b" stroke="#2a2a2a" stroke-width="0.5" />
<text x="577.5" y="247.9" font-size="8.1" fill="#333" stroke="#333" stroke-width="0.22" >Terminal S4</text>
<rect x="561.3" y="255.2" width="8.3" height="8" fill="#0b4d0b" stroke="#2a2a2a" stroke-width="0.5" />
<text x="577.5" y="262.2" font-size="8.1" fill="#333" stroke="#333" stroke-width="0.22" >Terminal S5</text>
<rect x="561.3" y="269.5" width="8.3" height="8" fill="#0b4d0b" stroke="#2a2a2a" stroke-width="0.5" />
<text x="577.5" y="276.5" font-size="8.1" fill="#333" stroke="#333" stroke-width="0.22" >Terminal S6</text>
<rect x="561.3" y="283.8" width="8.3" height="8" fill="#0b4d0b" stroke="#2a2a2a" stroke-width="0.5" />
<text x="577.5" y="290.8" font-size="8.1" fill="#333" stroke="#333" stroke-width="0.22" >Terminal S7</text>
<rect x="561.3" y="298.1" width="8.3" height="8" fill="#0b4d0b" stroke="#2a2a2a" stroke-width="0.5" />
<text x="577.5" y="305.1" font-size="8.1" fill="#333" stroke="#333" stroke-width="0.22" textLength="69" lengthAdjust="spacingAndGlyphs" >Terminal MA,MB,MC</text>
<rect x="561.3" y="312.4" width="8.3" height="8" fill="#0b4d0b" stroke="#2a2a2a" stroke-width="0.5" />
<text x="577.5" y="319.4" font-size="8.1" fill="#333" stroke="#333" stroke-width="0.22" >Terminal P1</text>
<rect x="561.3" y="326.70000000000005" width="8.3" height="8" fill="#0b4d0b" stroke="#2a2a2a" stroke-width="0.5" />
<text x="577.5" y="333.70000000000005" font-size="8.1" fill="#333" stroke="#333" stroke-width="0.22" >Terminal P2</text>
<text x="830" y="223.4" font-size="8.4" fill="#2a2a2a" font-weight="bold" textLength="7.5" lengthAdjust="spacingAndGlyphs" >1:</text>
<rect x="1008" y="213.4" width="20" height="13.8" fill="#a8d8f6" stroke="#5aaee0" stroke-width="1.2" rx="0.8" />
<text x="1010" y="223.6" font-size="8.6" fill="#1e3440" font-weight="bold" >0</text>
<text x="830" y="244.13" font-size="8.4" fill="#2a2a2a" font-weight="bold" textLength="7.5" lengthAdjust="spacingAndGlyphs" >2:</text>
<rect x="1008" y="234.13" width="20" height="13.8" fill="#a8d8f6" stroke="#5aaee0" stroke-width="1.2" rx="0.8" />
<text x="1010" y="244.32999999999998" font-size="8.6" fill="#1e3440" font-weight="bold" >0</text>
<text x="830" y="264.86" font-size="8.4" fill="#2a2a2a" font-weight="bold" textLength="7.5" lengthAdjust="spacingAndGlyphs" >3:</text>
<rect x="1008" y="254.86" width="20" height="13.8" fill="#a8d8f6" stroke="#5aaee0" stroke-width="1.2" rx="0.8" />
<text x="1010" y="265.06" font-size="8.6" fill="#1e3440" font-weight="bold" >0</text>
<text x="830" y="285.59000000000003" font-size="8.4" fill="#2a2a2a" font-weight="bold" textLength="7.5" lengthAdjust="spacingAndGlyphs" >4:</text>
<rect x="1008" y="275.59000000000003" width="20" height="13.8" fill="#a8d8f6" stroke="#5aaee0" stroke-width="1.2" rx="0.8" />
<text x="1010" y="285.79" font-size="8.6" fill="#1e3440" font-weight="bold" >0</text>
<text x="830" y="306.32" font-size="8.4" fill="#2a2a2a" font-weight="bold" textLength="7.5" lengthAdjust="spacingAndGlyphs" >5:</text>
<rect x="1008" y="296.32" width="20" height="13.8" fill="#a8d8f6" stroke="#5aaee0" stroke-width="1.2" rx="0.8" />
<text x="1010" y="306.52" font-size="8.6" fill="#1e3440" font-weight="bold" >0</text>
<text x="830" y="327.05" font-size="8.4" fill="#2a2a2a" font-weight="bold" textLength="7.5" lengthAdjust="spacingAndGlyphs" >6:</text>
<rect x="1008" y="317.05" width="20" height="13.8" fill="#a8d8f6" stroke="#5aaee0" stroke-width="1.2" rx="0.8" />
<text x="1010" y="327.25" font-size="8.6" fill="#1e3440" font-weight="bold" >0</text>
<text x="830" y="347.78" font-size="8.4" fill="#2a2a2a" font-weight="bold" textLength="7.5" lengthAdjust="spacingAndGlyphs" >7:</text>
<rect x="1008" y="337.78" width="20" height="13.8" fill="#a8d8f6" stroke="#5aaee0" stroke-width="1.2" rx="0.8" />
<text x="1010" y="347.97999999999996" font-size="8.6" fill="#1e3440" font-weight="bold" >0</text>
<text x="830" y="368.51" font-size="8.4" fill="#2a2a2a" font-weight="bold" textLength="7.5" lengthAdjust="spacingAndGlyphs" >8:</text>
<rect x="1008" y="358.51" width="20" height="13.8" fill="#a8d8f6" stroke="#5aaee0" stroke-width="1.2" rx="0.8" />
<text x="1010" y="368.71" font-size="8.6" fill="#1e3440" font-weight="bold" >0</text>
<rect x="843" y="213.4" width="149.7" height="13.4" fill="#ffff14" stroke="#b8b8a0" stroke-width="0.8" />
<text x="844.4" y="223.0" font-size="8.27" fill="#333" stroke="#333" stroke-width="0.22" >U1-01 Frequency Reference</text>
<rect x="985" y="219.8" width="3.2" height="1.1" fill="#7a7a7a" />
<rect x="843" y="234.13" width="149.7" height="13.4" fill="#ffff14" stroke="#b8b8a0" stroke-width="0.8" />
<text x="844.4" y="243.73" font-size="8.27" fill="#333" stroke="#333" stroke-width="0.22" >U1-03 Output Current</text>
<rect x="985" y="240.53" width="3.2" height="1.1" fill="#7a7a7a" />
<rect x="843" y="254.86" width="149.7" height="13.4" fill="#dfe9f7" stroke="#8aa0b8" stroke-width="0.8" />
<text x="844.4" y="264.46000000000004" font-size="8.45" fill="#555" stroke="#555" stroke-width="0.22" >No Signal Selected</text>
<rect x="985" y="261.26" width="3.2" height="1.1" fill="#7a7a7a" />
<rect x="843" y="358.51" width="149.7" height="13.4" fill="#dfe9f7" stroke="#8aa0b8" stroke-width="0.8" />
<text x="844.4" y="368.11" font-size="8.45" fill="#555" stroke="#555" stroke-width="0.22" >No Signal Selected</text>
<rect x="985" y="364.90999999999997" width="3.2" height="1.1" fill="#7a7a7a" />
<rect x="843.4" y="268.9" width="149.4" height="83.3" fill="#dde8f7" stroke="#8aa0c0" stroke-width="0.8" />
<rect x="843.8" y="269.2" width="148.6" height="10.6" fill="#0a63cf" />
<text x="845" y="277.7" font-size="8.45" fill="#ffffff" stroke="#ffffff" stroke-width="0.22" >No Signal Selected</text>
<text x="845" y="288.03" font-size="8.45" fill="#505050" stroke="#505050" stroke-width="0.22" >U1-01 Frequency Reference</text>
<text x="845" y="298.36" font-size="8.45" fill="#505050" stroke="#505050" stroke-width="0.22" >U1-02 Output Frequency</text>
<text x="845" y="308.69" font-size="8.45" fill="#505050" stroke="#505050" stroke-width="0.22" >U1-03 Output Current</text>
<text x="845" y="319.02" font-size="8.45" fill="#505050" stroke="#505050" stroke-width="0.22" >U1-04 Control Method</text>
<text x="845" y="329.34999999999997" font-size="8.45" fill="#505050" stroke="#505050" stroke-width="0.22" >U1-05 Motor Speed</text>
<text x="845" y="339.68" font-size="8.45" fill="#505050" stroke="#505050" stroke-width="0.22" >U1-06 Output Voltage Ref</text>
<text x="845" y="350.01" font-size="8.45" fill="#505050" stroke="#505050" stroke-width="0.22" >U1-07 DC Bus Voltage</text>
<path d="M918.3 259.5 V270 L920.9 267.8 L923.1 272.2 L924.9 271.3 L922.8 267 H926.3 Z" fill="#ffffff" stroke="#333" stroke-width="0.8"/>
<rect x="442" y="407.6" width="582" height="11" fill="#f0f0f0" />
<rect x="443" y="408" width="56.7" height="10.5" fill="#fdfdfd" stroke="#b4b4b4" stroke-width="0.8" />
<text x="471.3" y="416" font-size="7.4" fill="#222233" font-weight="bold" text-anchor="middle" textLength="24.6" lengthAdjust="spacingAndGlyphs">ONLINE</text>
<rect x="502" y="408" width="530" height="10.5" fill="#fdfdfd" stroke="#b4b4b4" stroke-width="0.8" />
<text x="506" y="416" font-size="7.5" fill="#b0283a" font-weight="bold" textLength="215.5" lengthAdjust="spacingAndGlyphs" >STATUS: OFF (Click start button to activate monitor Real-time)</text>
<rect x="24.5" y="117.7" width="4.0" height="0.8" fill="#505050" />
<rect x="80.6" y="117.5" width="3.4000000000000057" height="0.8" fill="#505050" />
<rect x="111" y="117.6" width="4" height="0.8" fill="#505050" />
<rect x="155.3" y="108.7" width="4.0" height="0.8" fill="#505050" />
<rect x="193.7" y="118.0" width="3.8000000000000114" height="0.8" fill="#505050" />
<rect x="463.6" y="110.9" width="2.7999999999999545" height="0.8" fill="#505050" />
<rect x="486.4" y="110.9" width="3.8000000000000114" height="0.8" fill="#505050" />
<rect x="517.4" y="111.0" width="4.600000000000023" height="0.8" fill="#505050" />
<rect x="574.4" y="111.0" width="4.0" height="0.8" fill="#505050" />
<rect x="601.2" y="111.0" width="3.599999999999909" height="0.8" fill="#505050" />
<rect x="638.6" y="111.0" width="3.6000000000000227" height="0.8" fill="#505050" />
<rect x="665.7" y="111.0" width="3.7999999999999545" height="0.8" fill="#505050" />
<rect x="72.8" y="208.1" width="5.1000000000000085" height="0.8" fill="#505050" />
<rect x="160.2" y="208.1" width="4.400000000000006" height="0.8" fill="#505050" />
<rect x="228.5" y="208.1" width="4.699999999999989" height="0.8" fill="#505050" />
</svg></body></html>
